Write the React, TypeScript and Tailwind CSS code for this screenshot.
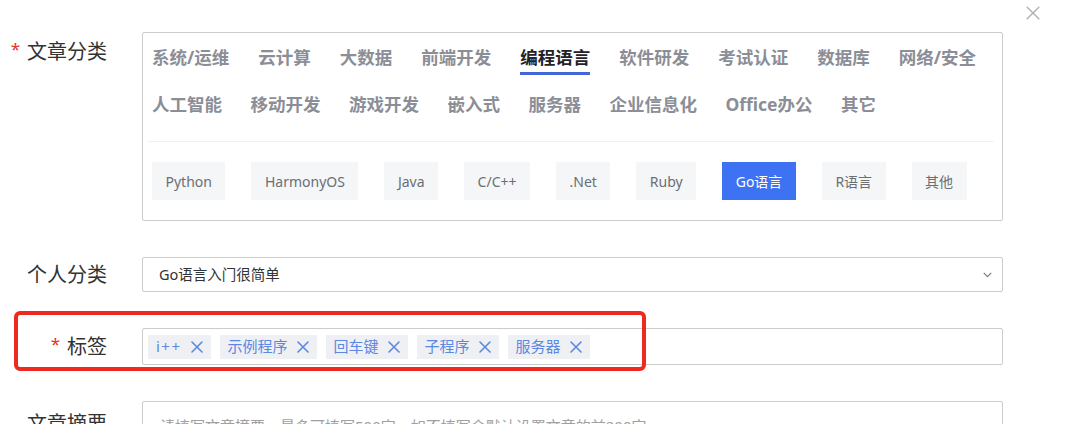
import React from "react";

const FONT = '"Noto Sans", "Noto Sans CJK SC", sans-serif';

const row1 = ["系统/运维", "云计算", "大数据", "前端开发", "编程语言", "软件研发", "考试认证", "数据库", "网络/安全"];
const row2 = ["人工智能", "移动开发", "游戏开发", "嵌入式", "服务器", "企业信息化", "Office办公", "其它"];
const pills = ["Python", "HarmonyOS", "Java", "C/C++", ".Net", "Ruby", "Go语言", "R语言", "其他"];
const tags = ["i++", "示例程序", "回车键", "子程序", "服务器"];

function XIcon({ size, color, width }: { size: number; color: string; width: number }) {
  return (
    <svg width={size} height={size} viewBox="0 0 12 12" fill="none">
      <path d="M1 1L11 11M11 1L1 11" stroke={color} strokeWidth={width} strokeLinecap="round" />
    </svg>
  );
}

function Label({ text, required, className = "" }: { text: string; required?: boolean; className?: string }) {
  return (
    <div className={`w-[107px] shrink-0 flex justify-end items-start text-[20px] leading-[28px] text-[#333333] ${className}`}>
      {required && <span className="text-[#e5332a] text-[17px] leading-[20px] mr-[7px] mt-[1px]">*</span>}
      <span>{text}</span>
    </div>
  );
}

export default function App() {
  return (
    <div className="relative w-[1065px] h-[424px] overflow-hidden bg-white" style={{ fontFamily: FONT }}>
      <div className="absolute left-[1026px] top-[6px]">
        <XIcon size={14} color="#b3b3b3" width={1.3} />
      </div>

      <div className="flex flex-col pt-[32px]">
        {/* 文章分类 */}
        <div className="flex">
          <Label text="文章分类" required className="pt-[6px]" />
          <div className="ml-[35px] w-[861px] h-[189px] border border-[#cccccc] rounded-[2px] flex flex-col">
            <div className="flex gap-[29px] pl-[9px] mt-[12px] h-[24px]">
              {row1.map((t) => {
                const active = t === "编程语言";
                return (
                  <div
                    key={t}
                    className={`relative text-[17.5px] leading-[24px] font-bold whitespace-nowrap ${active ? "text-[#222226]" : "text-[#8b8e96]"}`}
                  >
                    {t}
                    {active && <span className="absolute left-0 right-0 top-[27px] h-[3px] bg-[#4366d9]" />}
                  </div>
                );
              })}
            </div>
            <div className="flex gap-[28.5px] pl-[9px] mt-[23px] h-[24px]">
              {row2.map((t) => (
                <div key={t} className="text-[17.5px] leading-[24px] font-bold whitespace-nowrap text-[#8b8e96]">
                  {t}
                </div>
              ))}
            </div>
            <div className="ml-[4px] mr-[8px] mt-[25px] h-px bg-[#f0f1f3]" />
            <div className="flex gap-[26px] pl-[9px] mt-[20px]">
              {pills.map((p) => {
                const active = p === "Go语言";
                return (
                  <div
                    key={p}
                    className={`h-[38px] px-[13.5px] flex items-center text-[14px] whitespace-nowrap ${active ? "bg-[#3d72f2] text-white" : "bg-[#f5f6f7] text-[#6a6e75]"}`}
                  >
                    {p}
                  </div>
                );
              })}
            </div>
          </div>
        </div>

        {/* 个人分类 */}
        <div className="flex items-center mt-[36px]">
          <Label text="个人分类" />
          <div className="ml-[35px] w-[861px] h-[35px] border border-[#cccccc] rounded-[2px] flex items-center justify-between pl-[16px] pr-[10px]">
            <span className="text-[14.5px] text-[#333333]">Go语言入门很简单</span>
            <svg width="9" height="6" viewBox="0 0 9 6" fill="none">
              <path d="M0.8 0.8L4.5 4.6L8.2 0.8" stroke="#777777" strokeWidth="1.1" />
            </svg>
          </div>
        </div>

        {/* 标签 */}
        <div className="flex items-center mt-[36px]">
          <Label text="标签" required />
          <div className="ml-[35px] w-[861px] h-[37px] border border-[#cccccc] rounded-[2px] flex items-center gap-[8.5px] pl-[5px]">
            {tags.map((t) => (
              <div key={t} className="h-[24px] bg-[#eef0f3] flex items-center gap-[9.5px] pl-[8px] pr-[8px] text-[15px] text-[#5c88e2] whitespace-nowrap">
                <span className={t === "i++" ? "tracking-[1.5px]" : ""}>{t}</span>
                <XIcon size={12} color="#5c88e2" width={1.6} />
              </div>
            ))}
          </div>
        </div>

        {/* 文章摘要 */}
        <div className="flex mt-[36px]">
          <Label text="文章摘要" className="pt-[9px]" />
          <div className="ml-[35px] w-[861px] h-[80px] border border-[#cccccc] rounded-[2px] pl-[17px] pt-[12px]">
            <span className="text-[15px] text-[#a0a0a0] whitespace-nowrap">
              请填写文章摘要，最多可填写500字，如不填写会默认设置文章的前200字
            </span>
          </div>
        </div>
      </div>

      <div className="absolute left-[14px] top-[311px] w-[632px] h-[60px] border-[4px] border-[#ee2a20] rounded-[6px]" />
    </div>
  );
}
